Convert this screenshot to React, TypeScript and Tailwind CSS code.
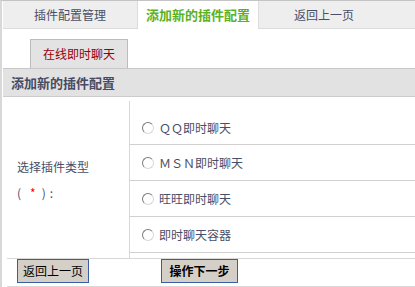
import React from "react";

function Radio() {
  return (
    <span className="inline-block w-[12px] h-[12px] rounded-full border border-t-[#7a7a7a] border-l-[#7a7a7a] border-b-[#d8d8d8] border-r-[#d8d8d8] bg-white shrink-0" />
  );
}

function Option({ label, first }: { label: string; first?: boolean }) {
  return (
    <div
      className={
        "flex border-b border-[#d0d0d0] pl-[12px] " +
        (first ? "h-[44px] items-start pt-[20px]" : "h-[36px] items-center")
      }
    >
      <div className="flex items-center h-[14px]">
        <Radio />
        <span className="ml-[5px] text-[12px] leading-[14px] text-[#4a4e66]">{label}</span>
      </div>
    </div>
  );
}

export default function App() {
  return (
    <div className="w-[415px] h-[287px] overflow-hidden bg-white border-t border-t-[#c4c4c4] border-l-2 border-l-[#d8d8d8] font-['Noto_Sans_CJK_SC','Noto_Sans',sans-serif]">
      <div className="pl-px">
        {/* Tab bar */}
        <div className="flex h-[28px] bg-[#eeeeee] border-b border-[#dcdcdc]">
          <div className="w-[134px] flex items-center justify-center text-[12px] text-[#4a4e66]">
            插件配置管理
          </div>
          <div className="w-[122px] h-[28px] bg-white border-x border-[#dcdcdc] flex items-center justify-center text-[13px] font-bold text-[#5cb21c]">
            添加新的插件配置
          </div>
          <div className="w-[130px] flex items-center justify-center text-[12px] text-[#4a4e66]">
            返回上一页
          </div>
        </div>

        {/* Sub tab area */}
        <div className="h-[40px] border-b border-[#c8c8c8] flex items-end">
          <div className="ml-[27px] w-[98px] h-[29px] border-t border-x border-[#bcbcbc] bg-[#e3e3e3] flex items-center justify-center text-[12px] text-[#990000]">
            在线即时聊天
          </div>
        </div>

        {/* Section header */}
        <div className="h-[28px] bg-[#e2e2e2] border-b border-[#cccccc] flex items-center pl-[8px] text-[13px] font-bold text-[#474b63]">
          添加新的插件配置
        </div>

        {/* Form */}
        <div className="mt-[4px] flex">
          <div className="w-[127px] h-[157px] border-r border-[#d8d8d8] flex flex-col justify-center pl-[14px] text-[12px] leading-[26px] text-[#4a4e66]">
            <div>选择插件类型</div>
            <div className="flex items-center">
              <span>(</span>
              <span className="ml-[9px] text-[#ff0000]">*</span>
              <span className="ml-[6px]">)</span>
              <span className="ml-[4px]">:</span>
            </div>
          </div>
          <div className="flex-1 flex flex-col">
            <Option first label="ＱＱ即时聊天" />
            <Option label="ＭＳＮ即时聊天" />
            <Option label="旺旺即时聊天" />
            <Option label="即时聊天容器" />
          </div>
        </div>

        {/* Buttons */}
        <div className="ml-[4px] h-[29px] border-y border-[#d8d8d8] flex items-start pl-[10px]">
          <button className="w-[72px] h-[24px] bg-[#d4d0c8] border border-[#3a5da8] text-[12px] text-black flex items-center justify-center">
            返回上一页
          </button>
          <button className="ml-[72px] w-[77px] h-[24px] bg-[#d4d0c8] border border-[#3a5da8] text-[12px] font-bold text-black flex items-center justify-center">
            操作下一步
          </button>
        </div>
      </div>
    </div>
  );
}
